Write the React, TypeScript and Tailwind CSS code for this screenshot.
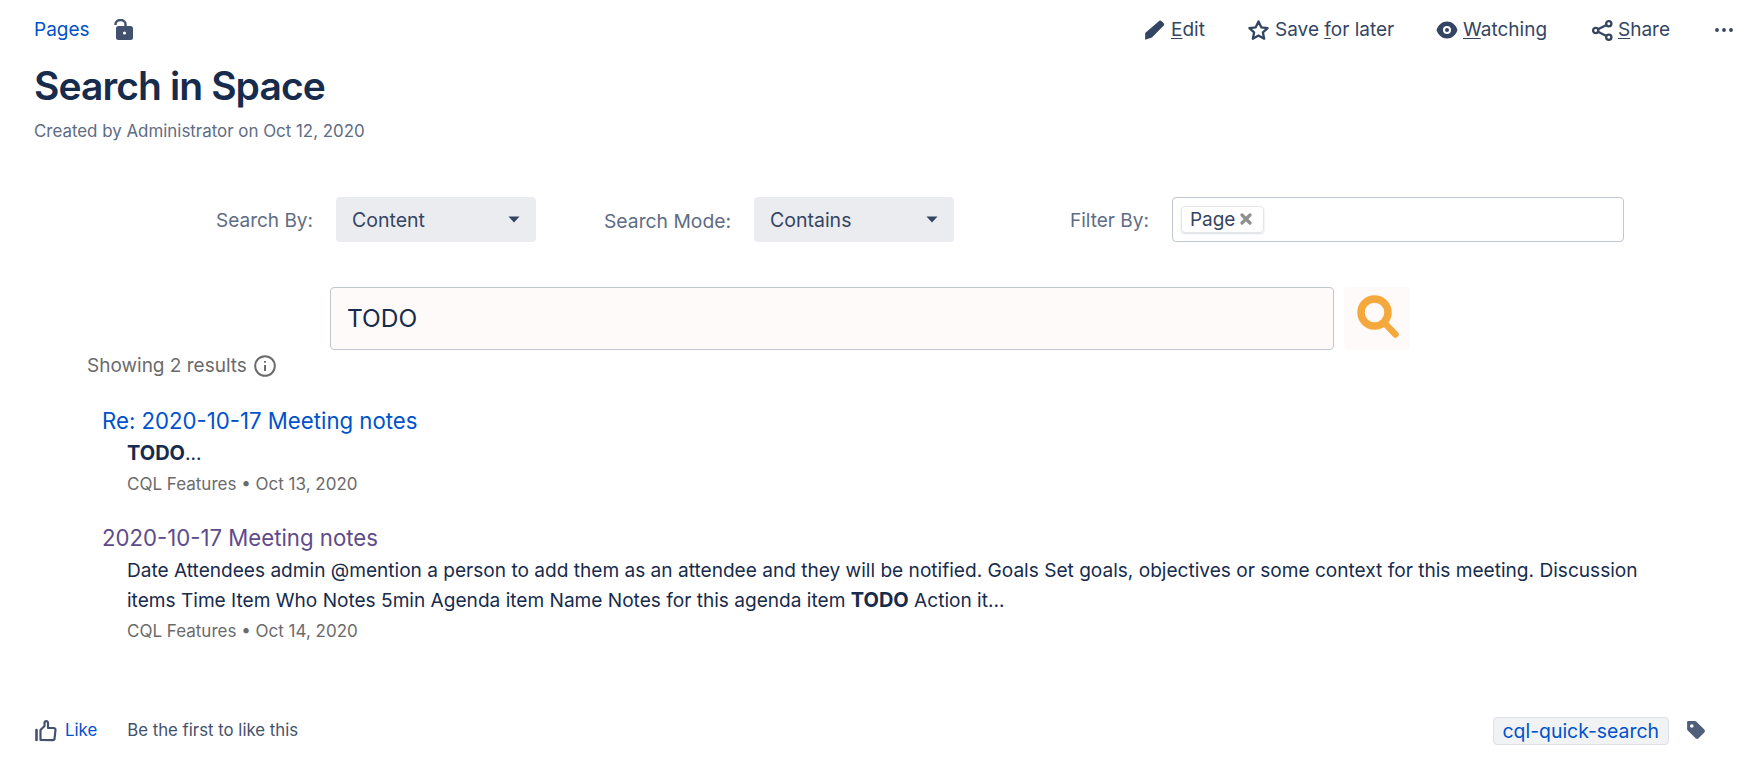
import React from 'react';

const Underlined = ({ pre = '', u, post }: { pre?: string; u: string; post: string }) => (
  <span>
    {pre}
    <span className="underline underline-offset-2">{u}</span>
    {post}
  </span>
);

const Caret = () => (
  <svg width="12" height="7" viewBox="0 0 12 7" className="fill-[#344563]">
    <path d="M0.5 0.5h11L6 6.5z" />
  </svg>
);

const Select = ({ value }: { value: string }) => (
  <div className="flex h-[45px] w-[200px] items-center justify-between rounded-[4px] bg-[#ebecf0] pl-4 pr-[16px] text-[#344563]">
    <span className="pt-[3px] text-[19.500px]">{value}</span>
    <Caret />
  </div>
);

const Toolbar = () => (
  <div className="flex items-center pt-[1px] text-[19px] text-[#344563]">
    <div className="flex w-[103px] items-center gap-[6px]">
      <svg width="21" height="21" viewBox="0 0 18 18" className="fill-[#344563]">
        <path d="M12.700 1a1.700 1.700 0 0 1 2.400 0l1.600 1.600a1.700 1.700 0 0 1 0 2.400L6.800 14.900 1 17l0-5.800z" />
      </svg>
      <Underlined u="E" post="dit" />
    </div>
    <div className="flex w-[189px] items-center gap-[5px]">
      <svg width="23" height="23" viewBox="0 0 24 24" fill="none" stroke="#344563" strokeWidth="2.400" strokeLinejoin="round">
        <path d="M12 2.500l2.900 6.200 6.600.8-4.900 4.500 1.300 6.600L12 17.300l-5.900 3.300 1.300-6.600L2.500 9.500l6.600-.8z" />
      </svg>
      <Underlined pre="Save " u="f" post="or later" />
    </div>
    <div className="flex w-[155px] items-center gap-[5px]">
      <svg width="22" height="22" viewBox="0 0 22 22">
        <path d="M0.500 11C2.500 5.500 6 2.500 11 2.500S19.500 5.500 21.500 11c-2 5.500-5.500 8.500-10.500 8.500S2.500 16.500 0.500 11z" className="fill-[#344563]" />
        <circle cx="11" cy="11" r="4" fill="#fff" />
        <circle cx="11" cy="11" r="2" className="fill-[#344563]" />
      </svg>
      <Underlined u="W" post="atching" />
    </div>
    <div className="flex w-[124px] items-center gap-[4px]">
      <svg width="23" height="23" viewBox="0 0 22 22" fill="none" stroke="#344563" strokeWidth="2.200">
        <circle cx="17" cy="4.500" r="2.500" />
        <circle cx="17" cy="17.500" r="2.500" />
        <circle cx="4.500" cy="11" r="2.500" />
        <path d="M14.800 5.700L6.700 9.800M14.800 16.300L6.700 12.200" />
      </svg>
      <Underlined u="S" post="hare" />
    </div>
    <svg width="18" height="4" viewBox="0 0 18 4" className="mr-[1px] fill-[#344563]">
      <circle cx="2" cy="2" r="1.900" />
      <circle cx="9" cy="2" r="1.900" />
      <circle cx="16" cy="2" r="1.900" />
    </svg>
  </div>
);

const Result = ({
  title,
  titleClass,
  date,
  children,
}: {
  title: string;
  titleClass: string;
  date: string;
  children: React.ReactNode;
}) => (
  <div className="mb-[25px]">
    <div className={`text-[22.200px] leading-[30px] ${titleClass}`}>{title}</div>
    <div className="pl-[25px]">
      <div className="mt-[3px] text-[19.080px] leading-[30px] text-[#172b4d]">{children}</div>
      <div className="mt-[1px] text-[17px] leading-[28px] text-[#6b6b6b]">CQL Features • {date}</div>
    </div>
  </div>
);

export default function App() {
  return (
    <div className="flex h-[779px] flex-col overflow-hidden bg-white pl-[34px] pr-[30px] font-['Inter',sans-serif] text-[19px]">
      {/* page header */}
      <div className="flex items-center justify-between pt-[15px]">
        <div className="flex items-center">
          <span className="pt-[1px] text-[19px] leading-[28px] text-[#0052cc]">Pages</span>
          <svg width="21" height="22" viewBox="0 0 21 22" className="ml-[23px] fill-[#42526e]">
            <path d="M2.500 6V5a5 4 0 0 1 10 0v3" fill="none" stroke="#42526e" strokeWidth="2.400" />
            <path fillRule="evenodd" d="M5.500 7h12A2.500 2.500 0 0 1 20 9.500v9a2.500 2.500 0 0 1-2.500 2.500h-12A2.500 2.500 0 0 1 3 18.500v-9A2.500 2.500 0 0 1 5.500 7zM11.500 12.400a1.600 1.600 0 1 0 0 3.200 1.600 1.600 0 0 0 0-3.200z" />
          </svg>
        </div>
        <Toolbar />
      </div>
      <h1 className="mt-[17px] text-[39px] leading-[48px] font-semibold tracking-[-0.900px] text-[#172b4d]">Search in Space</h1>
      <div className="mt-[9px] text-[16.900px] leading-[24px] text-[#5e6c84]">Created by Administrator on Oct 12, 2020</div>

      {/* search options */}
      <div className="mt-[54px] flex h-[45px] items-center text-[#5e6c84]">
        <span className="ml-[158px] w-[121px] pt-[5px] text-right whitespace-nowrap">Search By:</span>
        <div className="ml-[23px]"><Select value="Content" /></div>
        <span className="ml-[68px] pt-[5px] text-[19.300px] whitespace-nowrap">Search Mode:</span>
        <div className="ml-[23px]"><Select value="Contains" /></div>
        <span className="ml-[116px] pt-[5px] whitespace-nowrap">Filter By:</span>
        <div className="ml-[23px] flex h-[45px] w-[452px] items-center rounded-[4px] border border-[#c1c7d0] pl-[8px]">
          <div className="flex h-[27px] items-center gap-[5px] rounded-[4px] border border-[#e4e6ea] pr-[11px] pl-[8px] text-[19px] text-[#344563] shadow-[0_1px_2px_rgba(9,30,66,0.15)]">
            <span className="pt-[2px]">Page</span>
            <svg width="12" height="12" viewBox="0 0 12 12" stroke="#8f8f8f" strokeWidth="3.200" strokeLinecap="round">
              <path d="M2 2l8 8M10 2l-8 8" />
            </svg>
          </div>
        </div>
      </div>

      {/* search input */}
      <div className="mt-[45px] ml-[296px] flex items-center">
        <div className="flex h-[63px] w-[1004px] items-center rounded-[4px] border border-[#c1c7d0] bg-[#fefaf9] pl-[16px] text-[24.500px] text-[#172b4d]">TODO</div>
        <div className="ml-[10px] flex h-[63px] w-[66px] items-center justify-center rounded-[4px] bg-[#fefaf9]">
          <svg width="48" height="48" viewBox="0 0 48 48" fill="none" stroke="#f5a93c" strokeLinecap="round">
            <circle cx="21.500" cy="18.500" r="13.500" strokeWidth="7.500" />
            <path d="M32 29.500l10.500 11" strokeWidth="6.500" />
          </svg>
        </div>
      </div>

      {/* results */}
      <div className="ml-[53px] mt-[2px] flex items-center gap-[6px] text-[19px] leading-[28px] text-[#6b6b6b]">
        Showing 2 results
        <svg width="24" height="24" viewBox="0 0 22 22" fill="none" stroke="#6b6b6b" strokeWidth="1.800">
          <circle cx="11" cy="11" r="9" />
          <path d="M11 10v5.500M11 6.500v1.500" />
        </svg>
      </div>
      <div className="mt-[26px] ml-[68px] mr-[84px]">
        <Result title="Re: 2020-10-17 Meeting notes" titleClass="text-[#0052cc]" date="Oct 13, 2020">
          <b className="text-[20px] leading-none font-bold">TODO</b>...
        </Result>
        <Result title="2020-10-17 Meeting notes" titleClass="text-[#5e4b8b]" date="Oct 14, 2020">
          Date Attendees admin @mention a person to add them as an attendee and they will be notified. Goals Set goals, objectives or some context for this meeting. Discussion items Time Item Who Notes 5min Agenda item Name Notes for this agenda item <b className="text-[20px] leading-none font-bold">TODO</b> Action it...
        </Result>
      </div>

      {/* footer */}
      <div className="mt-auto mb-[34px] flex items-center justify-between">
        <div className="flex items-center text-[16.800px]">
          <svg width="22" height="24" viewBox="0 0 22 24" fill="none" stroke="#42526e" strokeWidth="2.200" strokeLinejoin="round" strokeLinecap="round" className="ml-[1px]">
            <path d="M1.500 11v10" strokeWidth="2.600" />
            <path d="M5.500 21V11l4-4V3.500a1.800 1.800 0 0 1 3.500 0V9h5.500a2 2 0 0 1 2 2l-1 9a1.500 1.500 0 0 1-1.500 1.200z" />
          </svg>
          <span className="ml-[8px] text-[#0052cc]">Like</span>
          <span className="ml-[30px] text-[#42526e]">Be the first to like this</span>
        </div>
        <div className="mr-[28px] flex items-center">
          <span className="rounded-[4px] border border-[#dfe1e6] bg-[#f1f2f4] px-[9px] pt-[1px] text-[19.400px] leading-[25px] text-[#0052cc]">cql-quick-search</span>
          <svg width="21" height="21" viewBox="0 0 20 20" className="ml-[16px] -mt-[2px] fill-[#505f79]">
            <path fillRule="evenodd" d="M3 1h6.500a2 2 0 0 1 1.400.600l7.500 7.500a2 2 0 0 1 0 2.800l-5.500 5.500a2 2 0 0 1-2.800 0L2.600 10A2 2 0 0 1 2 8.500V2a1 1 0 0 1 1-1zm3.500 3a1.700 1.700 0 1 0 0 3.400 1.700 1.700 0 0 0 0-3.400z" />
          </svg>
        </div>
      </div>
    </div>
  );
}
